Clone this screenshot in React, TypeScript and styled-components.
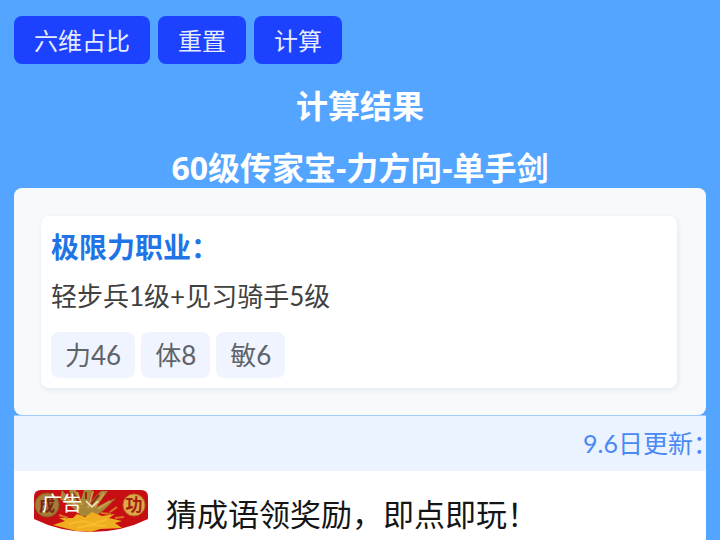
import React from "react";
import styled, { createGlobalStyle } from "styled-components";

const GlobalStyle = createGlobalStyle`
  * {
    box-sizing: border-box;
  }
  body {
    margin: 0;
    background: #54a5ff;
    font-family: Lato, "Noto Sans CJK SC", sans-serif;
    overflow: hidden;
  }
`;

const Page = styled.main`
  padding: 16px 14px 0;
`;

const Toolbar = styled.div`
  display: flex;
  gap: 8px;
`;

const ActionButton = styled.button`
  height: 48px;
  padding: 0 20px;
  border: 0;
  border-radius: 8px;
  background: #1c41ff;
  color: #e6ecff;
  font: 400 24px/48px "Noto Sans CJK SC", sans-serif;
  cursor: pointer;
`;

const Heading = styled.h2`
  margin: 22px 0 0;
  color: #fff;
  font: 700 32px/40px "Open Sans", "Noto Sans CJK SC", sans-serif;
  text-align: center;
`;

const ResultPanel = styled.section`
  padding: 28px 29px 27px 27px;
  border-radius: 8px;
  background: #f7f9fb;
`;

const ResultCard = styled.article`
  padding: 10px;
  border-radius: 8px;
  background: #fff;
  box-shadow: 1px 2px 6px rgba(30, 50, 80, 0.08);
`;

const CardTitle = styled.h3`
  margin: 0;
  color: #2174e6;
  font-size: 28px;
  line-height: 42px;
`;

const JobLine = styled.p`
  margin: 8px 0 16px;
  color: #404040;
  font-size: 26px;
  line-height: 40px;
`;

const Stats = styled.ul`
  display: flex;
  gap: 6px;
  margin: 0;
  padding: 0;
  list-style: none;
`;

const Stat = styled.li`
  padding: 0 14px;
  border-radius: 8px;
  background: #eff4ff;
  color: #606368;
  font-size: 26px;
  line-height: 46px;
`;

const Notice = styled.div`
  display: flex;
  justify-content: flex-end;
  border-top: 1px solid #a0ccfb;
  background: #eaf3ff;
  color: #4a88f5;
  font-size: 25px;
  line-height: 55px;
  white-space: nowrap;
`;

const NoticeText = styled.span`
  margin-right: -12px;
`;

const AdLink = styled.a`
  display: flex;
  align-items: flex-start;
  gap: 18px;
  padding: 19px 20px;
  background: #fff;
  color: #151515;
  font-size: 31px;
  line-height: 48px;
  text-decoration: none;
`;

const BannerArt = styled.svg`
  flex: none;
  width: 114px;
  height: 42px;
`;

function AdBanner() {
  return (
    <BannerArt viewBox="0 0 114 42" role="img" aria-label="广告">
      <defs>
        <clipPath id="bannerShape">
          <path d="M0 7Q0 0 7 0H107Q114 0 114 7V29Q88 42 57 42T0 29Z" />
        </clipPath>
      </defs>
      <g clipPath="url(#bannerShape)">
        <rect width="114" height="42" fill="#c60e13" />
        <path d="M28 0L38 12 35 0H42L46 13 50 0H58L54 14 67 1H74L62 17 82 8 70 20 62 26H47L39 18 26 9Z" fill="#a78638" />
        <path d="M43 2L48 15M59 1L54 18M70 3L61 17M33 8L46 18M76 11L64 19" stroke="#c9a04a" strokeWidth="2" />
        <path d="M39 3L45 12M65 5L57 14M52 2V9" stroke="#8e2a18" strokeWidth="2" />
        <path d="M19 35L31 31 25 28 39 28 43 24 51 27 58 22 68 26 81 24 75 28 88 31 81 33 88 38 66 39 57 42 42 41Z" fill="#efad20" />
        <path d="M35 34L49 31 60 34 73 29M43 38L57 35 72 36" fill="none" stroke="#f7bd2b" strokeWidth="2" />
        <path d="M76 22L83 17M81 28L90 27M67 23L77 24M25 25L34 28" stroke="#dc7024" strokeWidth="2" />
        <circle cx="13" cy="15" r="12" fill="#a87a35" stroke="#826329" strokeWidth="1" />
        <circle cx="100" cy="15" r="11" fill="#dda94a" stroke="#b76d23" strokeWidth="1" />
      </g>
      <g fontFamily="Noto Sans CJK SC, sans-serif">
        <text x="13" y="21" textAnchor="middle" fontSize="16" fontWeight="700" fill="#762715">成</text>
        <text x="100" y="21" textAnchor="middle" fontSize="17" fontWeight="700" fill="#a3210c">功</text>
        <text x="8" y="21" fontSize="20" fill="#fff">广告</text>
      </g>
      <path d="M52 11L58 17 64 11" fill="none" stroke="#f5e6ce" strokeWidth="1.5" />
    </BannerArt>
  );
}

const actions = ["六维占比", "重置", "计算"];
const stats = ["力46", "体8", "敏6"];

export default function App() {
  return (
    <>
      <GlobalStyle />
      <Page>
        <Toolbar>
          {actions.map((label) => (
            <ActionButton key={label} type="button">
              {label}
            </ActionButton>
          ))}
        </Toolbar>
        <Heading>计算结果</Heading>
        <Heading>60级传家宝-力方向-单手剑</Heading>
        <ResultPanel>
          <ResultCard>
            <CardTitle>极限力职业：</CardTitle>
            <JobLine>轻步兵1级+见习骑手5级</JobLine>
            <Stats>
              {stats.map((stat) => (
                <Stat key={stat}>{stat}</Stat>
              ))}
            </Stats>
          </ResultCard>
        </ResultPanel>
        <Notice>
          <NoticeText>9.6日更新：</NoticeText>
        </Notice>
        <AdLink href="#">
          <AdBanner />
          <span>猜成语领奖励，即点即玩！</span>
        </AdLink>
      </Page>
    </>
  );
}
